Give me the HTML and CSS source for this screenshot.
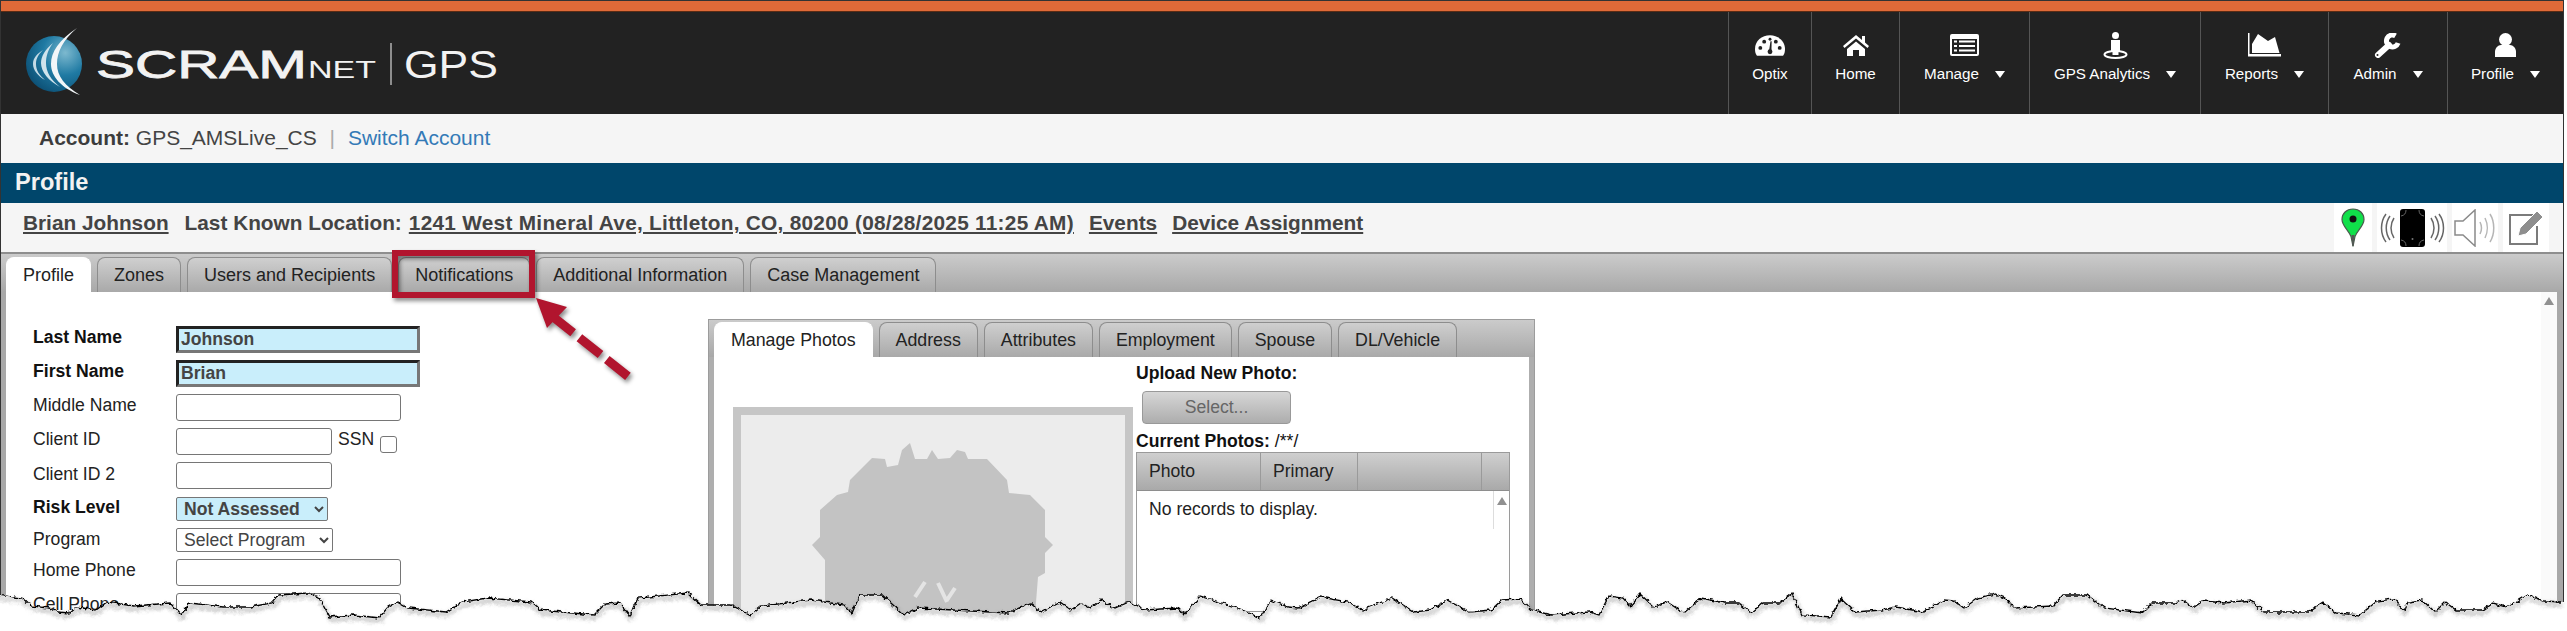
FILE: index.html
```html
<!DOCTYPE html>
<html lang="en">
<head>
    <meta charset="UTF-8">
    <title>Profile</title>
    <link rel="stylesheet" href="styles.css">
</head>
<body>
    <div class="page">
        <div class="top-stripe"></div>
        <header class="header">
            <svg class="logo" width="500" height="74" viewBox="0 0 500 74">
                <defs>
                    <radialGradient id="globe" cx="0.7" cy="0.3" r="0.8">
                        <stop offset="0" stop-color="#7db9cf"/>
                        <stop offset="0.5" stop-color="#1f7aa3"/>
                        <stop offset="1" stop-color="#0c4f74"/>
                    </radialGradient>
                </defs>
                <circle cx="53" cy="38" r="28" fill="url(#globe)"/>
                <path d="M76 2C58 14 50 26 50 38C50 50 60 62 79 69C64 60 56 50 56 38C56 26 62 14 76 2Z" fill="#f2f6f8"/>
                <path d="M52 17C44 24 40 30 40 37C40 46 48 55 59 61C50 54 45 46 45 37C45 30 47 24 52 17Z" fill="#cfe3ec"/>
                <path d="M42 24C36 28 32 32 32 38C32 44 37 50 44 54C38 49 35 44 35 38C35 32 38 28 42 24Z" fill="#c4dbe6"/>
                <text class="logo-text logo-heavy" x="95" y="52" font-size="38" textLength="211" lengthAdjust="spacingAndGlyphs">SCRAM</text>
                <text class="logo-text" x="307" y="52" font-size="24" textLength="68" lengthAdjust="spacingAndGlyphs">NET</text>
                <rect x="389" y="17" width="2" height="42" fill="#8d8d8d"/>
                <text class="logo-text" x="403" y="52" font-size="38" textLength="94" lengthAdjust="spacingAndGlyphs">GPS</text>
            </svg>
            <nav class="nav">
                <a class="nav-item nav-optix">
                    <span class="nav-icon"><svg width="30" height="21" viewBox="0 0 31 21"><path d="M15.500 0C7 0 0 6 0 14C0 17 .5 19 2 21H29C30.500 19 31 17 31 14C31 6 24 0 15.500 0Z" fill="#fff"/><circle cx="5.500" cy="13" r="2" fill="#222"/><circle cx="9.500" cy="6.500" r="2" fill="#222"/><circle cx="15.500" cy="4" r="1.500" fill="#222"/><circle cx="21.500" cy="6.500" r="2" fill="#222"/><circle cx="25.500" cy="13" r="2" fill="#222"/><path d="M16 6h1.200l-.2 10h-2.500z" fill="#222"/><circle cx="15.500" cy="17" r="2.500" fill="#222"/></svg></span>
                    <span class="nav-label">Optix</span>
                </a>
                <a class="nav-item nav-home">
                    <span class="nav-icon"><svg width="26" height="21" viewBox="0 0 26 21"><path d="M13 0L0 11l1.500 2L13 3.500 24.500 13l1.500-2-4-3.500V1h-3v4z" fill="#fff"/><path d="M4 14L13 6.500 22 14v7h-6v-6h-6v6H4z" fill="#fff"/></svg></span>
                    <span class="nav-label">Home</span>
                </a>
                <a class="nav-item nav-manage">
                    <span class="nav-icon"><svg width="29" height="22" viewBox="0 0 29 22"><rect width="29" height="22" rx="2" fill="#fff"/><rect x="2" y="5" width="25" height="15" fill="#222"/><path d="M4 6.500h3v2H4zM9 6.500h16v2H9zM4 11h3v2H4zM9 11h16v2H9zM4 15.500h3v2H4zM9 15.500h16v2H9z" fill="#fff"/></svg></span>
                    <span class="nav-label">Manage <i class="caret"></i></span>
                </a>
                <a class="nav-item nav-gps">
                    <span class="nav-icon"><svg width="25" height="27" viewBox="0 0 25 27"><circle cx="12.500" cy="3.500" r="3.500" fill="#fff"/><path d="M8 8h9v11h-1.500v4h-6v-4H8z" fill="#fff"/><ellipse cx="12.500" cy="22.500" rx="11" ry="3.500" fill="none" stroke="#fff" stroke-width="2"/></svg></span>
                    <span class="nav-label">GPS Analytics <i class="caret"></i></span>
                </a>
                <a class="nav-item nav-reports">
                    <span class="nav-icon"><svg width="33" height="24" viewBox="0 0 33 24"><path d="M0 0h1.500v21H33v2.500H0z" fill="#fff"/><path d="M4 20V11L10 1l10 7 7-4 4.500 16z" fill="#fff"/></svg></span>
                    <span class="nav-label">Reports <i class="caret"></i></span>
                </a>
                <a class="nav-item nav-admin">
                    <span class="nav-icon"><svg width="28" height="25" viewBox="0 0 28 25"><path d="M21.500 2.800A6 6 0 1 0 24.100 10" fill="none" stroke="#fff" stroke-width="5"/><path d="M15 12L4 22" stroke="#fff" stroke-width="6" stroke-linecap="round"/><circle cx="3.500" cy="22" r="1" fill="#222"/></svg></span>
                    <span class="nav-label">Admin <i class="caret"></i></span>
                </a>
                <a class="nav-item nav-profile">
                    <span class="nav-icon"><svg width="21" height="24" viewBox="0 0 21 24"><circle cx="10.500" cy="6.500" r="6.500" fill="#fff"/><path d="M0 24v-5c0-4 3-7 6-7h9c3 0 6 3 6 7v5z" fill="#fff"/></svg></span>
                    <span class="nav-label">Profile <i class="caret"></i></span>
                </a>
            </nav>
        </header>

        <div class="account-bar">
            <b>Account:</b> GPS_AMSLive_CS <span class="sep">|</span> <a class="link">Switch Account</a>
        </div>

        <div class="title-bar">Profile</div>

        <div class="info-bar">
            <a class="info-link">Brian Johnson</a>
            <b class="info-label">Last Known Location:</b>
            <a class="info-link address">1241 West Mineral Ave, Littleton, CO, 80200 (08/28/2025 11:25 AM)</a>
            <a class="info-link">Events</a>
            <a class="info-link">Device Assignment</a>
            <div class="status-icons">
                <span class="status-tile pin-tile"><svg width="24" height="39" viewBox="0 0 24 39"><path d="M12 1C5.500 1 1 5.500 1 11.500c0 6 6.500 11 9 17l2 10 2-10c2.500-6 9-11 9-17C23 5.500 18.500 1 12 1Z" fill="#10e04a" stroke="#4b5b4f" stroke-width="1.200"/><circle cx="12" cy="11" r="3.500" fill="#111"/><path d="M10.500 27h3l-1 11h-1z" fill="#555"/></svg></span>
                <span class="status-tile phone-tile"><svg width="66" height="40" viewBox="0 0 66 40"><rect x="21" y="1" width="25" height="38" rx="3" fill="#000"/><path d="M22 8a6 6 0 0 0 5-6M45 8a6 6 0 0 1-5-6M22 32a6 6 0 0 1 5 6M45 32a6 6 0 0 0-5 6" fill="none" stroke="#666" stroke-width="1"/><circle cx="33.500" cy="31" r="1" fill="#777"/><g fill="none" stroke="#666"><path d="M15 10c-4 6-4 14 0 20M11 8c-5 7-5 17 0 24M7 6c-6 8-6 20 0 28" stroke-width="1.500"/><path d="M52 10c4 6 4 14 0 20M56 8c5 7 5 17 0 24M60 6c6 8 6 20 0 28" stroke-width="1.500"/></g></svg></span>
                <span class="status-tile sound-tile"><svg width="42" height="38" viewBox="0 0 42 38"><path d="M1 12h8L21 1v36L9 26H1z" fill="none" stroke="#8a8a8a" stroke-width="1.500"/><path d="M26 13c2 4 2 8 0 12M31 9c3 6 3 14 0 20M36 5c5 8 5 20 0 28" fill="none" stroke="#b5b5b5" stroke-width="1.500"/></svg></span>
                <span class="status-tile edit-tile"><svg width="36" height="36" viewBox="0 0 36 36"><path d="M25 5H2v29h27V16" fill="none" stroke="#7b7b7b" stroke-width="2"/><path d="M10 26l2-8L29 1l6 6-17 17z" fill="#8e8e8e" stroke="#fff" stroke-width="1"/></svg></span>
            </div>
        </div>

        <div class="tab-strip main-tabs">
            <a class="tab active">Profile</a>
            <a class="tab">Zones</a>
            <a class="tab">Users and Recipients</a>
            <a class="tab">Notifications</a>
            <a class="tab">Additional Information</a>
            <a class="tab">Case Management</a>
        </div>

        <div class="content">
            <form class="form">
                <label class="req">Last Name</label>
                <div class="field"><input class="inp wide-hl" value="Johnson"></div>
                <label class="req">First Name</label>
                <div class="field"><input class="inp wide-hl" value="Brian"></div>
                <label>Middle Name</label>
                <div class="field"><input class="inp wide"></div>
                <label>Client ID</label>
                <div class="field"><input class="inp short"><span class="ssn">SSN</span><input class="check" type="checkbox"></div>
                <label>Client ID 2</label>
                <div class="field field-tall"><input class="inp short"></div>
                <label class="req">Risk Level</label>
                <div class="field"><select class="sel risk"><option>Not Assessed</option></select></div>
                <label class="sel-label">Program</label>
                <div class="field"><select class="sel program"><option>Select Program</option></select></div>
                <label>Home Phone</label>
                <div class="field"><input class="inp wide"></div>
                <label>Cell Phone</label>
                <div class="field"><input class="inp wide"></div>
            </form>

            <div class="photo-panel">
                <div class="tab-strip sub-tabs">
                    <a class="tab active">Manage Photos</a>
                    <a class="tab">Address</a>
                    <a class="tab">Attributes</a>
                    <a class="tab">Employment</a>
                    <a class="tab">Spouse</a>
                    <a class="tab">DL/Vehicle</a>
                </div>
                <div class="photo-body">
                    <div class="photo-box">
                        <svg class="silhouette" width="384" height="200" viewBox="3 3 384 200">
                            <path d="M82 98L99 83 110 80 112 68 134 46 147 47 149 55 160 53 164 38 172 31 177 47 189 47 194 38 200 47 212 46 219 38 227 40 230 47 249 47 269 68 271 81 292 83 307 98 307 125 315 133 307 141 307 161 300 165 297 203H87L87 148 74 133 82 125Z" fill="#c3c3c3"/>
                            <path d="M177 185L187 170M200 171L209 190M217 176L209 188" stroke="#e4e4e4" stroke-width="4" fill="none"/>
                        </svg>
                    </div>
                    <div class="photo-side">
                        <div class="side-head">Upload New Photo:</div>
                        <button class="select-btn" type="button">Select...</button>
                        <div class="side-head current"><b>Current Photos:</b> <span>/**/</span></div>
                        <div class="grid">
                            <div class="grid-head">
                                <span class="col col-photo">Photo</span>
                                <span class="col col-primary">Primary</span>
                                <span class="col col-blank"></span>
                                <span class="col col-scroll"></span>
                            </div>
                            <div class="grid-body">
                                <div class="no-records">No records to display.</div>
                                <div class="grid-scroll"><i class="up-arrow"></i></div>
                            </div>
                        </div>
                    </div>
                </div>
            </div>

            <div class="main-scroll"><i class="up-arrow"></i></div>
        </div>
    </div>

    <!-- callout arrow and torn paper edge drawn over the screenshot -->
    <svg class="overlay" width="2567" height="631" viewBox="0 0 2567 631">
        <defs>
            <filter id="rough" filterUnits="userSpaceOnUse" x="-20" y="560" width="2607" height="90">
                <feTurbulence type="fractalNoise" baseFrequency="0.22" numOctaves="2" seed="4"/>
                <feDisplacementMap in="SourceGraphic" scale="5" xChannelSelector="R" yChannelSelector="G"/>
            </filter>
        </defs>
        <g class="callout">
            <rect x="395" y="253" width="137" height="42" fill="none" stroke="#b1152e" stroke-width="6"/>
            <path d="M536 298L567 307 547 328Z" fill="#b1152e"/>
            <path d="M552 316L630 378" fill="none" stroke="#b1152e" stroke-width="9" stroke-dasharray="27 8"/>
        </g>
        <g filter="url(#rough)">
            <path d="M-20 593L22 598 31 606 49 608 58 612 69 613 76 607 96 610 107 602 134 606 170 603 181 615 190 603 223 607 250 607 272 603 279 595 308 593 319 597 330 617 353 615 379 618 388 607 397 602 408 608 446 612 462 602 487 598 531 602 540 610 594 615 605 604 620 603 630 616 638 598 688 593 701 605 731 605 750 615 761 606 811 600 844 605 852 613 860 595 882 595 904 615 918 608 953 610 1008 613 1030 603 1041 612 1060 602 1071 610 1081 603 1090 608 1101 600 1115 608 1129 602 1145 610 1178 608 1184 615 1200 596 1238 608 1260 618 1271 600 1288 607 1299 608 1321 597 1348 602 1362 610 1392 598 1414 612 1430 610 1447 600 1469 612 1491 610 1502 600 1521 599 1531 610 1551 615 1589 612 1599 615 1609 596 1623 598 1630 606 1640 594 1654 607 1667 602 1684 613 1701 598 1725 603 1739 603 1751 613 1763 603 1780 603 1792 593 1802 615 1831 617 1841 599 1855 612 1882 610 1896 607 1923 612 1944 600 1954 601 1964 608 1978 598 1995 594 2005 598 2015 608 2053 606 2063 595 2087 595 2104 608 2142 613 2152 603 2176 603 2183 600 2193 608 2203 601 2224 603 2251 600 2264 612 2309 612 2323 603 2336 613 2360 615 2377 601 2394 599 2404 611 2408 602 2422 600 2435 612 2445 602 2456 610 2483 610 2493 603 2507 607 2527 595 2544 601 2561 602 2587 602V640H-20Z" fill="#fff"/>
            <path class="tear-line" d="M-20 593L22 598 31 606 49 608 58 612 69 613 76 607 96 610 107 602 134 606 170 603 181 615 190 603 223 607 250 607 272 603 279 595 308 593 319 597 330 617 353 615 379 618 388 607 397 602 408 608 446 612 462 602 487 598 531 602 540 610 594 615 605 604 620 603 630 616 638 598 688 593 701 605 731 605 750 615 761 606 811 600 844 605 852 613 860 595 882 595 904 615 918 608 953 610 1008 613 1030 603 1041 612 1060 602 1071 610 1081 603 1090 608 1101 600 1115 608 1129 602 1145 610 1178 608 1184 615 1200 596 1238 608 1260 618 1271 600 1288 607 1299 608 1321 597 1348 602 1362 610 1392 598 1414 612 1430 610 1447 600 1469 612 1491 610 1502 600 1521 599 1531 610 1551 615 1589 612 1599 615 1609 596 1623 598 1630 606 1640 594 1654 607 1667 602 1684 613 1701 598 1725 603 1739 603 1751 613 1763 603 1780 603 1792 593 1802 615 1831 617 1841 599 1855 612 1882 610 1896 607 1923 612 1944 600 1954 601 1964 608 1978 598 1995 594 2005 598 2015 608 2053 606 2063 595 2087 595 2104 608 2142 613 2152 603 2176 603 2183 600 2193 608 2203 601 2224 603 2251 600 2264 612 2309 612 2323 603 2336 613 2360 615 2377 601 2394 599 2404 611 2408 602 2422 600 2435 612 2445 602 2456 610 2483 610 2493 603 2507 607 2527 595 2544 601 2561 602" fill="none" stroke="#000" stroke-width="1.300"/>
        </g>
    </svg>
</body>
</html>
```

FILE: styles.css
```css
* {
    margin: 0;
    padding: 0;
    box-sizing: border-box;
}

body {
    position: relative;
    width: 2567px;
    height: 631px;
    overflow: hidden;
    background-color: #fff;
    font-family: "Liberation Sans", Arial, sans-serif;
    font-size: 17.6px;
    color: #222;
}

.page {
    width: 2564px;
    height: 631px;
    overflow: hidden;
    border: 1px solid #333;
    border-bottom: 0;
    background-color: #a8a8a8;
}

.top-stripe {
    height: 11px;
    background-color: #e06a38;
    border-bottom: 1px solid #5a2c15;
}

.header {
    display: flex;
    justify-content: space-between;
    height: 102px;
    background-color: #222;
}

.logo {
    margin-top: 14px;
    margin-left: 0;
}

.logo-text {
    font-family: "Liberation Sans", Arial, sans-serif;
    fill: #f2f2f2;
}

.logo-heavy {
    stroke: #f2f2f2;
    stroke-width: 0.8px;
}

.nav {
    display: flex;
}

.nav-item {
    display: flex;
    flex-direction: column;
    align-items: center;
    border-left: 1px solid #555;
    color: #fff;
    font-size: 15.2px;
}

.nav-optix {
    width: 83px;
}

.nav-home {
    width: 88px;
}

.nav-manage {
    width: 130px;
}

.nav-gps {
    width: 171px;
}

.nav-reports {
    width: 128px;
}

.nav-admin {
    width: 119px;
}

.nav-profile {
    width: 116px;
}

.nav-icon {
    display: flex;
    align-items: center;
    justify-content: center;
    height: 30px;
    margin-top: 18px;
}

.nav-label {
    display: flex;
    align-items: center;
    margin-top: 4px;
    line-height: 20px;
    white-space: nowrap;
}

.caret {
    width: 0;
    height: 0;
    margin-left: 16px;
    border-left: 5.5px solid transparent;
    border-right: 5.5px solid transparent;
    border-top: 7px solid #fff;
}

.account-bar {
    height: 49px;
    padding-left: 38px;
    background-color: #f5f5f5;
    font-size: 21px;
    line-height: 48px;
    color: #444;
}

.account-bar b {
    color: #3c3c3c;
}

.sep {
    margin: 0 7px;
    color: #aaa;
}

.link {
    color: #337ab7;
}

.title-bar {
    height: 40px;
    padding-left: 14px;
    background-color: #00466b;
    color: #f2f2f2;
    font-size: 23.6px;
    font-weight: bold;
    line-height: 39px;
}

.info-bar {
    display: flex;
    gap: 15px;
    position: relative;
    height: 51px;
    padding: 8px 0 0 22px;
    background-color: #f5f5f5;
    border-bottom: 2px solid #8e8e8e;
    color: #444;
    font-size: 20.8px;
    font-weight: bold;
    line-height: 24px;
}

.info-link {
    text-decoration: underline;
    white-space: nowrap;
}

.address {
    letter-spacing: 0.28px;
}

.info-label {
    margin-left: 1px;
    margin-right: -8px;
    white-space: nowrap;
}

.status-icons {
    display: flex;
    gap: 5px;
    position: absolute;
    top: 0;
    right: 14px;
    height: 49px;
}

.status-tile {
    display: flex;
    align-items: center;
    justify-content: center;
    background-color: #fff;
}

.pin-tile {
    width: 38px;
}

.phone-tile {
    width: 70px;
}

.sound-tile {
    width: 46px;
}

.edit-tile {
    width: 46px;
}

.tab-strip {
    display: flex;
    gap: 6px;
    background: linear-gradient(#cbcbcb, #a8a8a8);
}

.main-tabs {
    height: 38px;
    padding: 3px 0 0 5px;
}

.tab {
    height: 35px;
    padding: 0 16px;
    border: 1px solid #8d8d8d;
    border-bottom: 0;
    border-radius: 8px 8px 0 0;
    background: linear-gradient(#cfcfcf, #a9a9a9);
    color: #222;
    font-size: 18px;
    line-height: 34px;
    white-space: nowrap;
}

.tab.active {
    background: #fff;
    border-color: #fff;
}

.content {
    display: flex;
    position: relative;
    height: 340px;
    margin: 0 6px 0 5px;
    background-color: #fff;
}

.form {
    display: grid;
    grid-template-columns: 143px 1fr;
    row-gap: 7px;
    align-content: start;
    align-items: center;
    flex: 0 0 auto;
    width: 702px;
    padding: 34px 0 0 27px;
}

.form label {
    color: #222;
    margin-top: -4px;
}

.form .req {
    font-weight: bold;
    color: #111;
}

.form .sel-label {
    margin-top: -2px;
}

.field {
    display: flex;
    align-items: center;
}

.field-tall {
    height: 28px;
    align-items: flex-start;
}

.inp {
    height: 27px;
    border: 1px solid #767676;
    border-radius: 3px;
    background-color: #fff;
    font-family: inherit;
    font-size: 17.6px;
}

.wide {
    width: 225px;
}

.short {
    width: 156px;
}

.wide-hl {
    width: 244px;
    padding-left: 2px;
    border: 3px solid;
    border-color: #222 #777 #777 #222;
    border-radius: 0;
    background-color: #c9eefb;
    color: #444;
    font-weight: bold;
}

.ssn {
    margin-left: 6px;
    margin-top: -4px;
}

.check {
    appearance: none;
    width: 17px;
    height: 17px;
    margin: 6px 0 0 6px;
    border: 1px solid #767676;
    border-radius: 3px;
    background-color: #fff;
}

.sel {
    height: 24px;
    border: 1px solid #767676;
    border-radius: 2px;
    padding-left: 3px;
    font-family: inherit;
    font-size: 17.6px;
    color: #444;
    background-color: #fff;
}

.risk {
    width: 152px;
    background-color: #c9eefb;
    font-weight: bold;
}

.program {
    width: 157px;
}

.photo-panel {
    flex: 0 0 auto;
    align-self: flex-start;
    width: 827px;
    height: 320px;
    margin-top: 27px;
    border: 1px solid #9c9c9c;
    padding: 0 5px;
    background-color: #aeaeae;
}

.sub-tabs {
    height: 37px;
    margin: 0 -5px;
    padding: 2px 0 0 5px;
}

.sub-tabs .tab {
    height: 35px;
    font-size: 17.8px;
}

.photo-body {
    display: flex;
    height: 300px;
    background-color: #fff;
}

.photo-box {
    flex: 0 0 auto;
    width: 400px;
    height: 260px;
    margin: 50px 3px 0 19px;
    border: 8px solid #c6c6c6;
    background-color: #ececec;
    overflow: hidden;
}

.silhouette {
    display: block;
    filter: blur(0.6px);
}

.photo-side {
    flex: 1;
    padding-right: 19px;
}

.side-head {
    height: 24px;
    margin-top: 4px;
    font-weight: bold;
    color: #111;
    line-height: 24px;
}

.side-head.current {
    height: 22px;
    margin-top: 6px;
    line-height: 22px;
}

.side-head span {
    font-weight: normal;
}

.select-btn {
    display: block;
    width: 149px;
    height: 33px;
    margin: 6px 0 0 6px;
    border: 1px solid #999;
    border-radius: 4px;
    background: linear-gradient(#d6d6d6, #adadad);
    color: #666;
    font-family: inherit;
    font-size: 17.6px;
}

.grid {
    height: 160px;
    border: 1px solid #9a9a9a;
}

.grid-head {
    display: flex;
    height: 38px;
    background: linear-gradient(#cfcfcf, #a9a9a9);
    border-bottom: 1px solid #8e8e8e;
    line-height: 37px;
}

.col {
    padding-left: 12px;
    border-right: 1px solid #9a9a9a;
}

.col-photo {
    width: 124px;
}

.col-primary {
    width: 97px;
}

.col-blank {
    width: 124px;
}

.col-scroll {
    flex: 1;
    border-right: 0;
}

.grid-body {
    display: flex;
    justify-content: space-between;
    height: 120px;
}

.no-records {
    padding: 8px 0 0 12px;
}

.grid-scroll {
    width: 16px;
    height: 38px;
    padding-top: 6px;
    border-left: 1px solid #ddd;
}

.main-scroll {
    position: absolute;
    top: 0;
    right: 0;
    width: 16px;
    height: 100%;
    padding-top: 5px;
    background-color: #fafafa;
}

.up-arrow {
    display: block;
    width: 0;
    height: 0;
    margin: 0 auto;
    border-left: 5px solid transparent;
    border-right: 5px solid transparent;
    border-bottom: 8px solid #909090;
}

.overlay {
    position: absolute;
    top: 0;
    left: 0;
    pointer-events: none;
}

.callout {
    filter: drop-shadow(2px 3px 2px rgba(0, 0, 0, 0.45));
}

.tear-line {
    filter: drop-shadow(1px 3px 2px rgba(0, 0, 0, 0.6));
}
```
